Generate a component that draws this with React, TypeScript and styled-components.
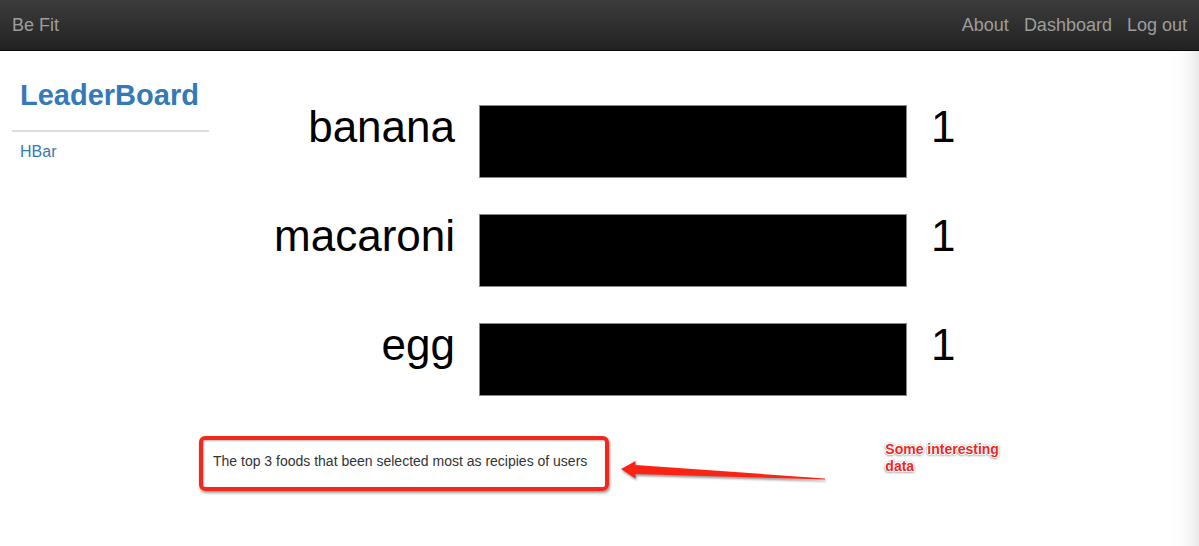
import React from "react";
import styled, { createGlobalStyle } from "styled-components";

const GlobalStyle = createGlobalStyle`
  * { box-sizing: border-box; }
  body {
    margin: 0;
    background: #fff;
    color: #333;
    font-family: "Liberation Sans", Arial, sans-serif;
    font-size: 14px;
    line-height: 20px;
  }
`;

const Page = styled.div`
  display: flex;
  flex-direction: column;
  min-height: 100vh;
`;

const Navbar = styled.nav`
  display: flex;
  align-items: center;
  justify-content: space-between;
  padding: 15px 12px;
  background: linear-gradient(to bottom, #3c3c3c, #222);
  border-bottom: 1px solid #080808;
`;

const NavLinks = styled.div`
  display: flex;
  gap: 15px;
`;

const NavLink = styled.a`
  color: #9d9d9d;
  font-size: 18px;
  line-height: 20px;
  text-decoration: none;
`;

const Body = styled.div`
  flex: 1;
  background: linear-gradient(to left, #e8e8e8, #f4f4f4 8px, #fcfcfc 18px, #fff 30px);
`;

const Columns = styled.div`
  display: grid;
  grid-template-columns: 197px minmax(0, 1fr);
  padding-left: 12px;
`;

const Sidebar = styled.aside`
  padding-top: 20px;
`;

const Heading = styled.h1`
  margin: 0;
  padding: 8px 8px 18px;
  border-bottom: 2px solid #ddd;
  font-size: 29px;
  line-height: 33px;
`;

const SideItem = styled.div`
  padding: 10px 8px;
  font-size: 16px;
`;

const SideLink = styled.a`
  color: #337ab7;
  text-decoration: none;
`;

const Chart = styled.main`
  display: flex;
  flex-direction: column;
  gap: 36px;
  padding-top: 54px;
`;

const ChartRow = styled.div`
  display: grid;
  grid-template-columns: 246px 428fr 268fr;
  column-gap: 24px;
  color: #000;
  font-size: 44px;
  line-height: 44px;
`;

const Label = styled.span`
  text-align: right;
`;

const Bar = styled.div`
  height: 73px;
  background: #000;
  border: 1px solid #888;
`;

const Notes = styled.section`
  display: flex;
  align-items: flex-start;
  padding: 40px 0 0 199px;
`;

const Caption = styled.p`
  margin: 0;
  padding: 11px 18px 16px 10px;
  border: 4px solid #f0281e;
  border-radius: 6px;
  box-shadow: 1px 2px 3px rgba(0, 0, 0, 0.4), inset 1px 1px 2px rgba(0, 0, 0, 0.3);
  line-height: 20px;
  white-space: nowrap;
`;

const Arrow = styled.svg`
  flex: none;
  margin: 21px 54px 0 8px;
  filter: drop-shadow(1px 2px 1px rgba(0, 0, 0, 0.4));
`;

const Remark = styled.p`
  margin: 5px 0 0;
  width: 120px;
  color: #ee281f;
  font-weight: bold;
  line-height: 17px;
  text-shadow: 1px 0 #fff, -1px 0 #fff, 0 1px #fff, 0 -1px #fff, 1px 1px #fff, -1px -1px #fff,
    0 0 3px #444, 0 1px 3px #555;
`;

const foods = [
  { name: "banana", count: 1 },
  { name: "macaroni", count: 1 },
  { name: "egg", count: 1 },
];

export default function App() {
  const most = Math.max(...foods.map((food) => food.count));
  return (
    <Page>
      <GlobalStyle />
      <Navbar>
        <NavLink href="#home">Be Fit</NavLink>
        <NavLinks>
          <NavLink href="#about">About</NavLink>
          <NavLink href="#dashboard">Dashboard</NavLink>
          <NavLink href="#logout">Log out</NavLink>
        </NavLinks>
      </Navbar>
      <Body>
        <Columns>
          <Sidebar>
            <Heading>
              <SideLink href="#leaderboard">LeaderBoard</SideLink>
            </Heading>
            <SideItem>
              <SideLink href="#hbar">HBar</SideLink>
            </SideItem>
          </Sidebar>
          <Chart>
            {foods.map((food) => (
              <ChartRow key={food.name}>
                <Label>{food.name}</Label>
                <Bar style={{ width: `${(food.count / most) * 100}%` }} />
                <span>{food.count}</span>
              </ChartRow>
            ))}
          </Chart>
        </Columns>
        <Notes>
          <Caption>The top 3 foods that been selected most as recipies of users</Caption>
          <Arrow width="214" height="28" viewBox="0 0 214 28" aria-hidden="true">
            <path d="M4 12 18.500 4V8L208 21.500V22.500L18.500 17V21.500Z" fill="#fb2313" />
          </Arrow>
          <Remark>Some interesting data</Remark>
        </Notes>
      </Body>
    </Page>
  );
}
